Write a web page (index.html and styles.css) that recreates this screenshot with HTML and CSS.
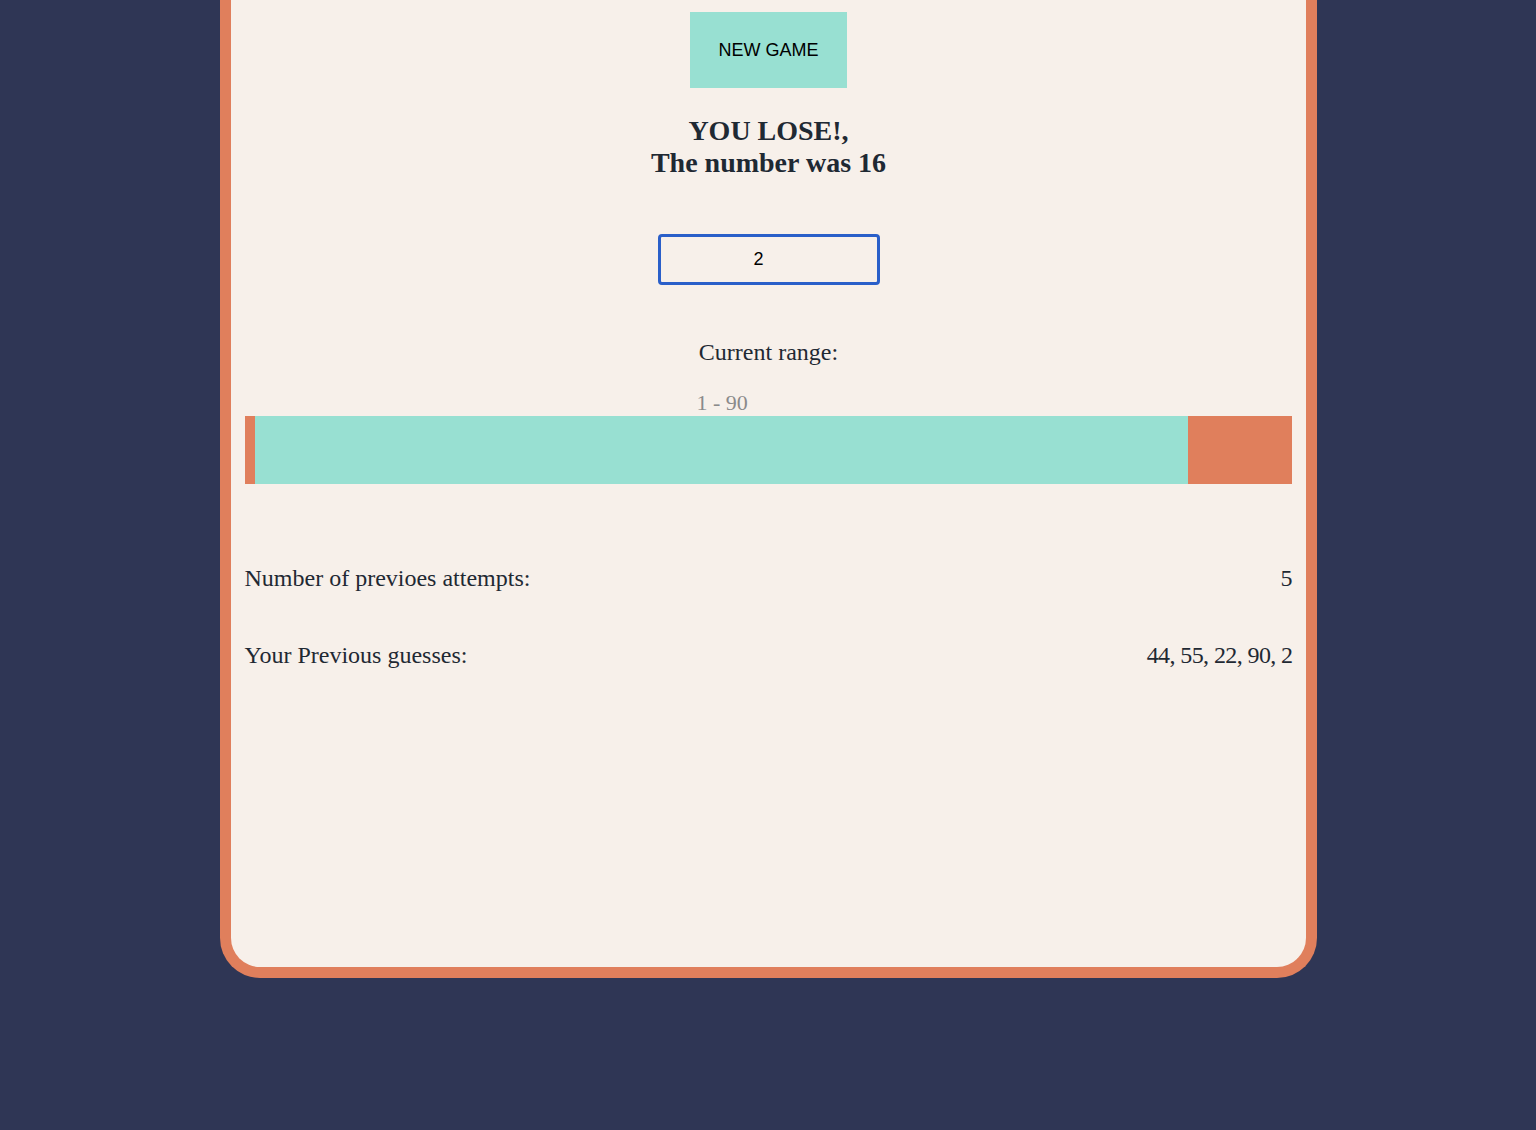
FILE: index.html
```html
<!DOCTYPE html>
<html lang="en">
<head>
<meta charset="utf-8">
<title>Guess the number</title>
<link rel="stylesheet" href="styles.css">
</head>
<body>
<main class="card">
  <button class="new-game" type="button">NEW GAME</button>
  <h2 class="result">YOU LOSE!,<br>The number was 16</h2>
  <input class="guess" type="text" value="2" autofocus>
  <p class="range-label">Current range:</p>
  <p class="range-value">1 - 90</p>
  <div class="range-bar">
    <div class="out" style="width:1%"></div>
    <div class="in" style="width:89%"></div>
    <div class="out" style="width:10%"></div>
  </div>
  <div class="stat first">
    <span>Number of previoes attempts:</span>
    <span>5</span>
  </div>
  <div class="stat">
    <span>Your Previous guesses:</span>
    <span class="nums">44, 55, 22, 90, 2</span>
  </div>
</main>
</body>
</html>
```

FILE: styles.css
```css
html, body {
  margin: 0;
  padding: 0;
  background: #2f3655;
  height: 100%;
}
body {
  font-family: "Liberation Serif", "Times New Roman", serif;
  color: #1f2933;
}
.card {
  box-sizing: border-box;
  width: 1097px;
  height: 978px;
  margin: 0 auto;
  background: #f7f0ea;
  border: 11px solid #e07f5c;
  border-top: none;
  border-radius: 0 0 40px 40px;
  padding: 12px 13px 0 14px;
  display: flex;
  flex-direction: column;
  align-items: center;
}
.new-game {
  width: 157px;
  height: 76px;
  background: #98e0d2;
  border: none;
  border-radius: 0;
  font-family: "Liberation Sans", Arial, sans-serif;
  font-size: 18px;
  color: #000;
  padding: 0;
}
.result {
  margin: 27px 0 0 0;
  font-size: 28px;
  line-height: 32px;
  font-weight: bold;
  text-align: center;
}
.guess {
  box-sizing: border-box;
  margin-top: 55px;
  width: 222px;
  height: 51px;
  border: 3px solid #2a5fc9;
  border-radius: 4px;
  background: transparent;
  font-family: "Liberation Sans", Arial, sans-serif;
  font-size: 18px;
  text-align: center;
  padding: 0 20px 0 0;
  color: #000;
  outline: none;
}
.range-label {
  margin: 53px 0 0 0;
  font-size: 24px;
  line-height: 28px;
}
.range-value {
  align-self: stretch;
  margin: 24px 0 0 0;
  padding-left: 452px;
  font-size: 22px;
  line-height: 26px;
  color: #8a8a8a;
}
.range-bar {
  align-self: stretch;
  display: flex;
  height: 68px;
}
.range-bar .out { background: #e07f5c; }
.range-bar .in { background: #98e0d2; }
.stat {
  align-self: stretch;
  display: flex;
  justify-content: space-between;
  font-size: 24px;
  line-height: 28px;
  margin-top: 49px;
}
.stat.first {
  margin-top: 80px;
}
.nums {
  letter-spacing: -0.6px;
}
```
